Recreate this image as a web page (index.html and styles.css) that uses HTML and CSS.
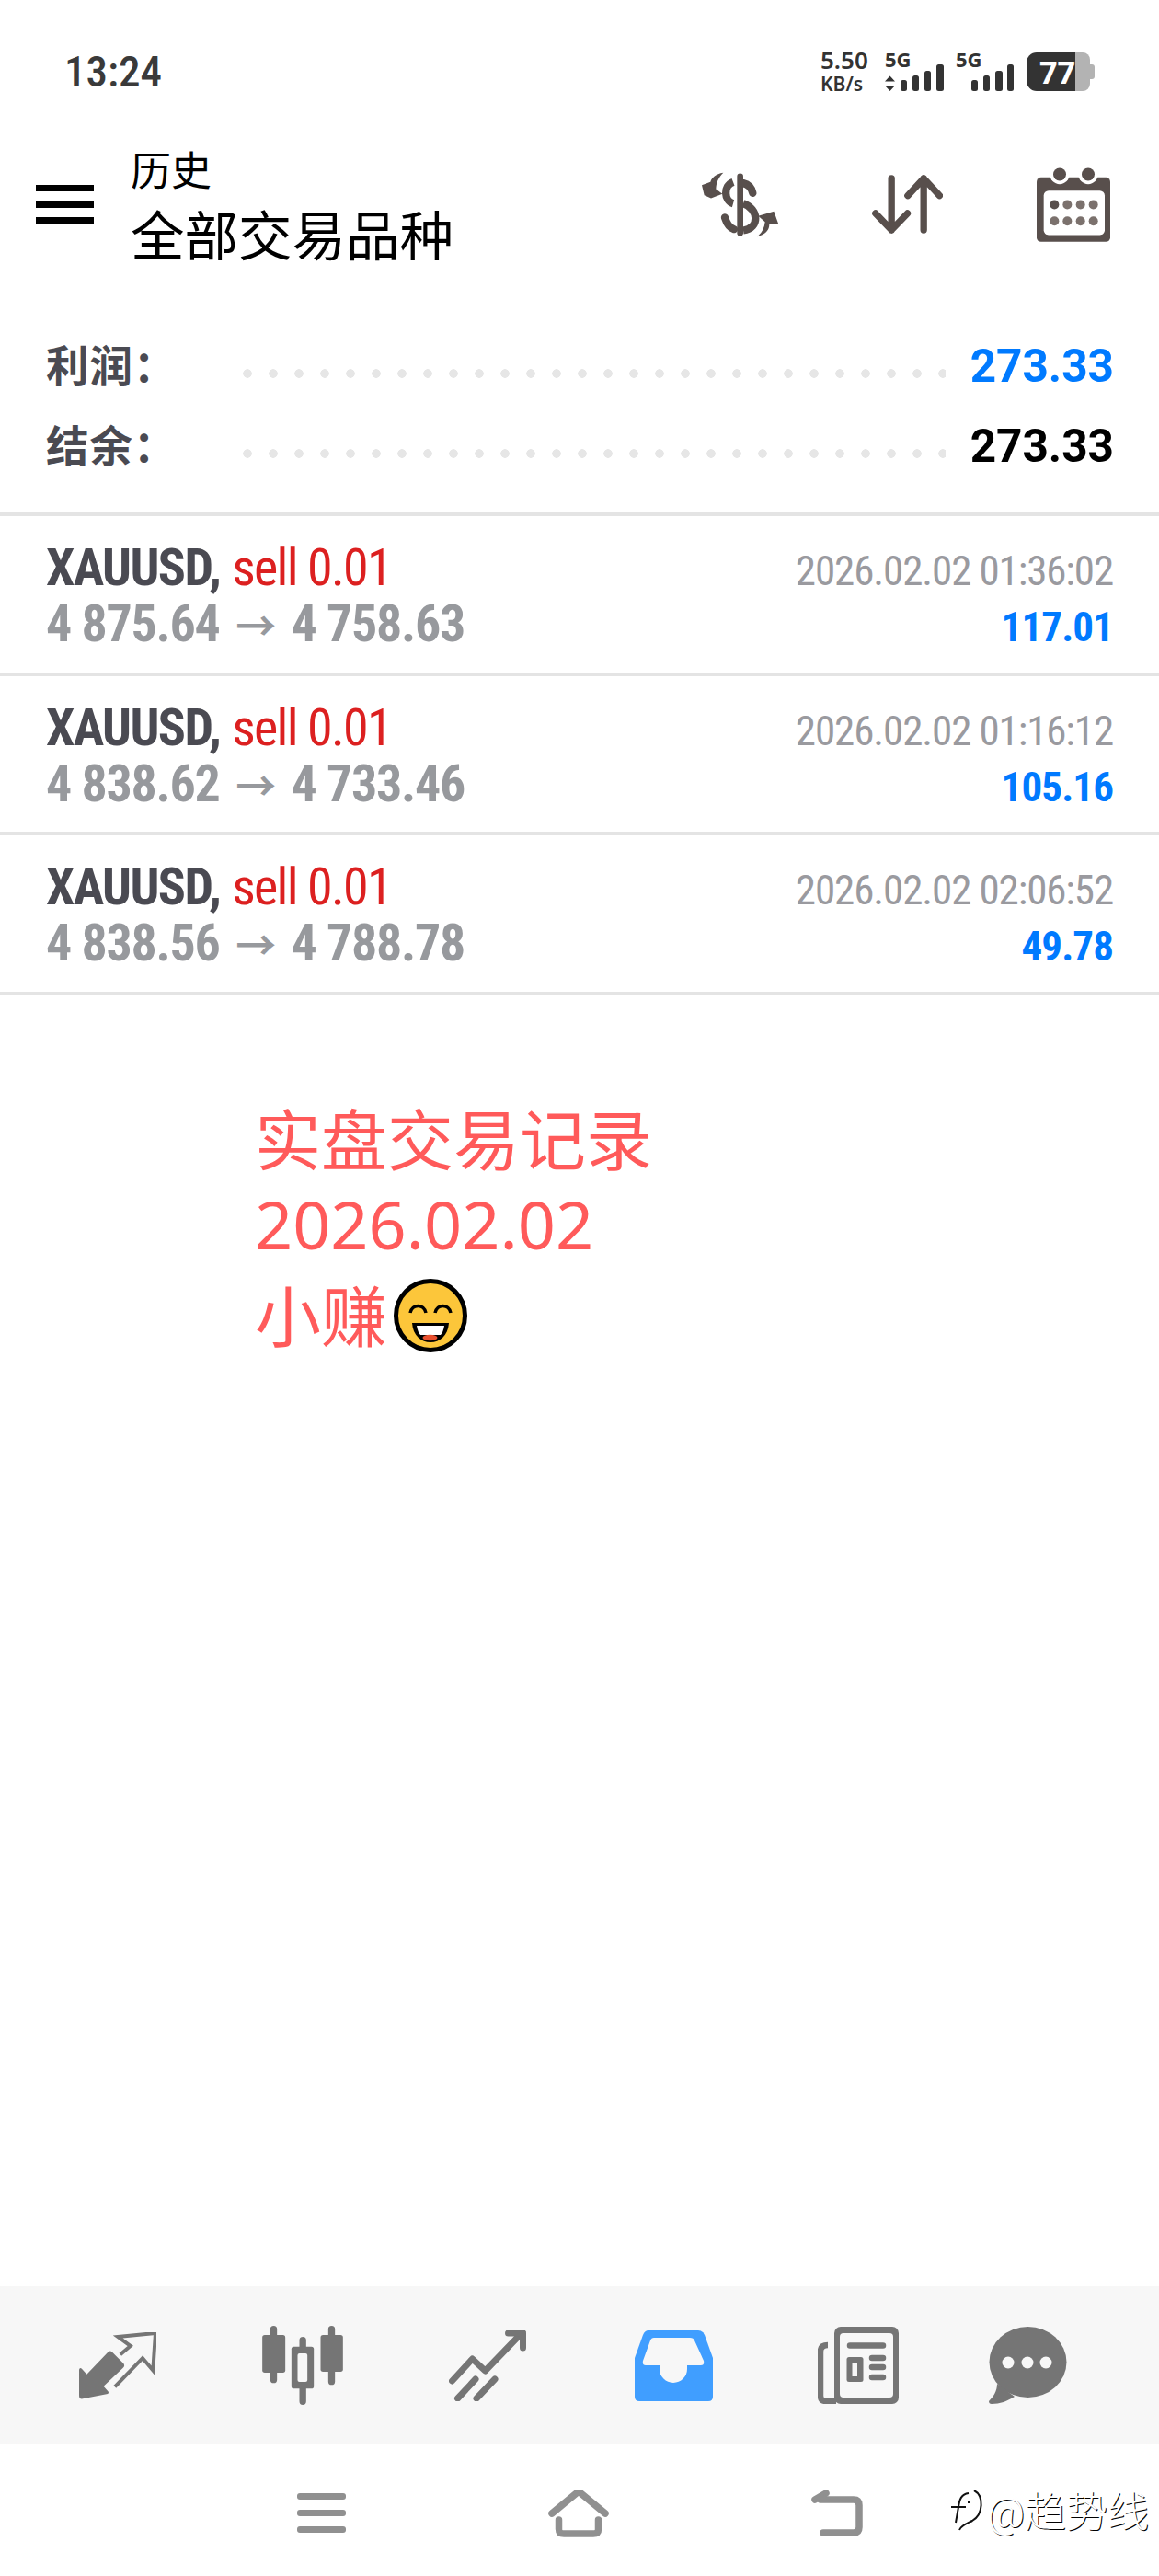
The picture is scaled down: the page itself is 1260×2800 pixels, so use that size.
FILE: index.html
```html
<!DOCTYPE html>
<html lang="zh-CN">
<head>
  <meta charset="UTF-8" />
  <meta name="viewport" content="width=device-width, initial-scale=1.0" />
  <title>历史</title>
  <link rel="stylesheet" href="styles.css">
</head>
<body>

<div class="page">

  <div class="status-bar">
    <div class="clock">13:24</div>
    <div class="status-right">
      <div class="net-speed"><span>5.50</span><small>KB/s</small></div>
      <svg class="signal" viewBox="0 0 64 42">
        <text x="0" y="16">5G</text>
        <path d="M5.500 25.500 11 31.500H0zM5.500 42 11 36H0z" fill="#333"/>
        <rect x="17" y="30" width="7" height="12" rx="2.500"/>
        <rect x="30" y="25" width="7" height="17" rx="2.500"/>
        <rect x="43" y="20" width="7" height="22" rx="2.500"/>
        <rect x="56" y="13" width="8" height="29" rx="2.500"/>
      </svg>
      <svg class="signal signal-b" viewBox="0 0 64 42">
        <text x="0" y="16">5G</text>
        <rect x="17" y="30" width="7" height="12" rx="2.500"/>
        <rect x="30" y="25" width="7" height="17" rx="2.500"/>
        <rect x="43" y="20" width="8" height="22" rx="2.500"/>
        <rect x="56" y="13" width="7" height="29" rx="2.500"/>
      </svg>
      <div class="battery">
        <div class="battery-level">77</div>
        <div class="battery-rest"></div>
        <div class="battery-nub"></div>
      </div>
    </div>
  </div>

  <div class="top-bar">
    <div class="menu-btn"><i></i><i></i><i></i></div>
    <div class="title-block">
      <div class="title-small">历史</div>
      <div class="title-big">全部交易品种</div>
    </div>
    <div class="top-actions">
      <svg class="icon-money" viewBox="70 70 252 212">
        <path d="M140 72C116 76 102 88 98 102L70 112 78 145 100 155 137 141 116 125C117 105 124 88 140 72Z" fill="#584f4c"/>
        <path d="M250 280C274 274 290 262 290 240L320 240 305 198 254 213 276 232C274 252 266 268 250 280Z" fill="#584f4c"/>
        <g fill="none" stroke="#584f4c" stroke-width="25">
          <path d="M195 84V268" stroke-width="20" stroke-linecap="round"/>
          <path d="M172 102C138 115 143 164 172 172"/>
          <path d="M205 106C222 110 232 120 236 138" stroke-linecap="round"/>
          <path d="M205 172C256 190 260 252 205 260"/>
          <path d="M145 218C152 240 160 252 175 256" stroke-linecap="round"/>
        </g>
      </svg>
      <svg class="icon-sort" viewBox="625 80 230 192">
        <g fill="none" stroke="#584f4c" stroke-width="22" stroke-linecap="round" stroke-linejoin="round">
          <path d="M688 92V260M636 206 688 260 740 206"/>
          <path d="M793 260V92M741 148 793 92 845 148"/>
        </g>
      </svg>
      <svg class="icon-cal" viewBox="1160 50 240 242">
        <rect x="1160" y="82" width="240" height="210" rx="14" fill="#584f4c"/>
        <rect x="1183" y="125" width="199" height="145" rx="16" fill="#fff"/>
        <circle cx="1235" cy="72" r="32" fill="#fff"/>
        <circle cx="1328" cy="72" r="32" fill="#fff"/>
        <circle cx="1235" cy="72" r="21" fill="#584f4c"/>
        <circle cx="1328" cy="72" r="21" fill="#584f4c"/>
        <g fill="#7b716d">
          <circle cx="1218" cy="171" r="15" fill="#584f4c"/>
          <circle cx="1260" cy="171" r="15"/>
          <circle cx="1303" cy="171" r="15"/>
          <circle cx="1345" cy="171" r="15"/>
          <circle cx="1218" cy="224" r="15"/>
          <circle cx="1260" cy="224" r="15"/>
          <circle cx="1303" cy="224" r="15"/>
          <circle cx="1345" cy="224" r="15"/>
        </g>
      </svg>
    </div>
  </div>

  <div class="summary">
    <div class="summary-row">
      <span class="summary-label">利润：</span>
      <span class="summary-dots"></span>
      <span class="summary-value blue">273.33</span>
    </div>
    <div class="summary-row">
      <span class="summary-label">结余：</span>
      <span class="summary-dots"></span>
      <span class="summary-value">273.33</span>
    </div>
  </div>

  <div class="deal">
    <div class="deal-line">
      <span class="deal-main"><b>XAUUSD,</b> <em>sell 0.01</em></span>
      <span class="deal-date">2026.02.02 01:36:02</span>
    </div>
    <div class="deal-line">
      <span class="deal-price">4 875.64 <i>→</i> 4 758.63</span>
      <span class="deal-profit">117.01</span>
    </div>
  </div>
  <div class="deal">
    <div class="deal-line">
      <span class="deal-main"><b>XAUUSD,</b> <em>sell 0.01</em></span>
      <span class="deal-date">2026.02.02 01:16:12</span>
    </div>
    <div class="deal-line">
      <span class="deal-price">4 838.62 <i>→</i> 4 733.46</span>
      <span class="deal-profit">105.16</span>
    </div>
  </div>
  <div class="deal">
    <div class="deal-line">
      <span class="deal-main"><b>XAUUSD,</b> <em>sell 0.01</em></span>
      <span class="deal-date">2026.02.02 02:06:52</span>
    </div>
    <div class="deal-line">
      <span class="deal-price">4 838.56 <i>→</i> 4 788.78</span>
      <span class="deal-profit">49.78</span>
    </div>
  </div>

  <div class="content">
    <div class="note">
      <div class="note-first">实盘交易记录</div>
      <div>2026.02.02</div>
      <div class="note-last">小赚
        <svg class="emoji" viewBox="0 0 80 80">
          <circle cx="40" cy="40" r="37.500" fill="#fcc63a" stroke="#000" stroke-width="5"/>
          <path d="M18 37C20 27 33 27 35 37M45 37C47 27 60 27 62 37" fill="none" stroke="#000" stroke-width="3.500"/>
          <path d="M20 48H60C59 62 50 69 40 69 30 69 21 62 20 48Z" fill="#000"/>
          <path d="M25 51H55C54 56 53 59 51 61H29C27 59 26 56 25 51Z" fill="#fff"/>
          <ellipse cx="39.500" cy="64" rx="8" ry="3.200" fill="#e8502f"/>
        </svg>
      </div>
    </div>
  </div>

  <div class="tab-bar">
    <div class="tab">
      <svg class="tab-quotes" viewBox="78 105 254 220">
        <path d="M175 170Q182 164 188 170L224 206Q232 214 224 222L160 282 176 300Q178 306 170 308L92 323Q80 325 80 314V228Q82 218 90 226L105 243Z" fill="#757575"/>
        <path d="M197 284 288 190 322 230 330 108 207 120 248 150 215 178" fill="none" stroke="#757575" stroke-width="12"/>
      </svg>
    </div>
    <div class="tab">
      <svg class="tab-chart" viewBox="675 82 263 258">
        <g stroke="#757575" stroke-width="22" stroke-linecap="round">
          <path d="M712 93V258M901 93V264M807 129V329"/>
        </g>
        <rect x="675" y="112" width="75" height="123" rx="8" fill="#757575"/>
        <rect x="865" y="112" width="73" height="120" rx="8" fill="#757575"/>
        <rect x="770" y="150" width="73" height="137" rx="8" fill="#757575"/>
        <rect x="790" y="172" width="32" height="93" rx="6" fill="#f7f7f7"/>
      </svg>
    </div>
    <div class="tab">
      <svg class="tab-trade" viewBox="0 0 84 77">
        <g fill="none" stroke="#757575" stroke-width="7" stroke-linecap="round" stroke-linejoin="round">
          <path d="M3.500 55 25.500 31 39.500 44 80 2"/>
          <path d="M64.500 3H80.500V19"/>
          <path d="M9.500 74 29 53M30 74 50 53"/>
        </g>
      </svg>
    </div>
    <div class="tab">
      <svg class="tab-history" viewBox="0 0 85 77">
        <path d="M15 0H69Q74 0 76 5L85 30V72Q85 77 80 77H5Q0 77 0 72V30L9 5Q11 0 15 0Z" fill="#409eff"/>
        <path d="M21 8H60Q64 8 65 11L75 33Q76 38 72 38H57V42A15 15 0 0 1 27 42V38H12Q8 38 9 33L17 11Q18 8 21 8Z" fill="#f7f7f7"/>
      </svg>
    </div>
    <div class="tab">
      <svg class="tab-news" viewBox="0 0 88 84">
        <rect x="18" y="0" width="70" height="84" rx="7" fill="#757575"/>
        <rect x="24" y="7" width="58" height="70" rx="4" fill="#f7f7f7"/>
        <path d="M11 20Q3 20 3 27V75Q3 81 9 81H20" fill="none" stroke="#757575" stroke-width="6.500"/>
        <rect x="31.500" y="33" width="18" height="27" rx="2.500" fill="#757575"/>
        <rect x="37.500" y="39" width="5.500" height="15" fill="#f7f7f7"/>
        <g stroke="#757575" stroke-width="6.500" stroke-linecap="round">
          <path d="M35 20.500H71M59 34H71M59 44H71M59 55H71"/>
        </g>
      </svg>
    </div>
    <div class="tab">
      <svg class="tab-chat" viewBox="0 0 85 84">
        <ellipse cx="42.500" cy="38.500" rx="42" ry="38.500" fill="#757575"/>
        <path d="M9 62C9 70 5 76 0 81Q0 84 3 84C12 84 20 81 28 76Z" fill="#757575"/>
        <circle cx="21" cy="39" r="6.500" fill="#f7f7f7"/>
        <circle cx="42" cy="39" r="6.500" fill="#f7f7f7"/>
        <circle cx="62" cy="39" r="6.500" fill="#f7f7f7"/>
      </svg>
    </div>
  </div>

  <div class="nav-bar">
    <div class="nav-menu"><i></i><i></i><i></i></div>
    <svg class="nav-home" viewBox="0 0 66 52">
      <g fill="none" stroke="#909090" stroke-width="7.500" stroke-linecap="round">
        <path d="M4 26 33 2 62 26"/>
        <path d="M11.500 33V43Q11.500 48 17 48H49Q54.500 48 54.500 43V33"/>
      </g>
    </svg>
    <svg class="nav-back" viewBox="0 0 57 52">
      <g fill="none" stroke="#909090" stroke-width="7.500" stroke-linecap="round">
        <path d="M4 11 16 4"/>
        <path d="M10 11H46Q52 11 52 17V41Q52 47 46 47H13"/>
      </g>
    </svg>
    <div class="watermark">
      <svg class="watermark-logo" viewBox="0 0 38 46">
        <path d="M26 2C37 8 36 28 24 35 18 38 12 40 10 45M20 5C12 6 10 12 9 20L6 37M1 20H17M20 14V16" fill="none" stroke="#111" stroke-width="2"/>
      </svg>
      <span>@趋势线</span>
    </div>
  </div>

</div>

</body>
</html>
```

FILE: styles.css
```css
* {
  box-sizing: border-box;
}

body {
  margin: 0;
  background: #fff;
  font-family: Roboto, "Noto Sans CJK SC", sans-serif;
}

.page {
  position: relative;
  width: 1260px;
  height: 2800px;
  display: flex;
  flex-direction: column;
  overflow: hidden;
}

/* status bar */
.status-bar {
  height: 156px;
  display: flex;
  align-items: center;
  justify-content: space-between;
  padding: 0 70px;
}

.clock {
  margin-bottom: 2px;
  font-size: 47px;
  font-weight: 500;
  font-stretch: 86%;
  color: #3a3a3a;
}

.status-right {
  display: flex;
  align-items: center;
  color: #333;
}

.net-speed {
  width: 51px;
  display: flex;
  flex-direction: column;
  font-family: "Noto Sans", sans-serif;
  font-weight: 600;
  line-height: 26px;
  margin-right: 19px;
}

.net-speed span {
  font-size: 26px;
}

.net-speed small {
  font-size: 21px;
}

.signal {
  width: 64px;
  height: 42px;
  fill: #333;
  margin-right: 13px;
  overflow: visible;
}

.signal text {
  font-family: "Noto Sans", sans-serif;
  font-size: 22px;
  font-weight: 700;
}

.battery {
  display: flex;
  align-items: center;
  height: 42px;
}

.battery-level {
  width: 53px;
  height: 42px;
  background: #333;
  border-radius: 11px 0 0 11px;
  color: #fff;
  font-family: "Noto Sans", sans-serif;
  font-size: 34px;
  font-weight: 700;
  line-height: 42px;
  text-align: right;
}

.battery-rest {
  width: 16px;
  height: 42px;
  background: #b3b3b3;
  border-radius: 0 8px 8px 0;
}

.battery-nub {
  width: 5px;
  height: 16px;
  background: #b3b3b3;
  border-radius: 0 3px 3px 0;
}

/* header */
.top-bar {
  height: 132px;
  display: flex;
  align-items: center;
  padding-left: 39px;
}

.menu-btn {
  width: 63px;
  height: 42px;
  display: flex;
  flex-direction: column;
  justify-content: space-between;
}

.menu-btn i {
  height: 7px;
  background: #000;
}

.title-block {
  margin-left: 40px;
  padding-top: 5px;
  color: #000;
}

.title-small {
  font-size: 44px;
  line-height: 62px;
}

.title-big {
  margin-top: 5px;
  font-size: 58.500px;
  line-height: 70px;
}

.top-actions {
  position: relative;
  margin-left: auto;
  display: flex;
  align-items: center;
  height: 80px;
  padding-right: 53px;
}

.icon-money {
  width: 84px;
  height: 71px;
}

.icon-sort {
  width: 77px;
  height: 64px;
  margin-left: 101px;
}

.icon-cal {
  width: 80px;
  height: 81px;
  margin-left: 102px;
}

/* totals */
.summary {
  padding: 66px 49px 30px 50px;
  border-bottom: 4px solid #e4e4e4;
  height: 273px;
}

.summary-row {
  height: 87px;
  display: flex;
  align-items: center;
}

.summary-label {
  width: 214px;
  margin-bottom: 6px;
  font-size: 46.500px;
  font-weight: 700;
  letter-spacing: 1px;
  color: #4a4a52;
}

.summary-dots {
  flex: 1;
  height: 10px;
  margin: 16px 27px 0 0;
  background-image: radial-gradient(circle at 5px 5px, #e6e6e6 4.500px, transparent 5px);
  background-size: 28px 10px;
  background-repeat: repeat-x;
}

.summary-value {
  font-size: 49.500px;
  font-weight: 700;
  color: #000;
}

.summary-value.blue {
  color: #007aff;
}

/* deals */
.deal {
  height: 173.500px;
  padding: 26px 50px 0;
  border-bottom: 4px solid #e4e4e4;
}

.deal-line {
  height: 61px;
  display: flex;
  justify-content: space-between;
  align-items: baseline;
  line-height: 61px;
  font-stretch: 75%;
}

.deal-main {
  font-size: 56px;
}

.deal-main b {
  font-weight: 700;
  letter-spacing: -1.600px;
  color: #4a4a52;
}

.deal-main em {
  font-style: normal;
  font-weight: 400;
  letter-spacing: -1.700px;
  color: #dc2020;
}

.deal-date {
  font-size: 45px;
  letter-spacing: -1.100px;
  color: #9a9a9f;
}

.deal-price {
  font-size: 56px;
  font-weight: 700;
  letter-spacing: -1.300px;
  color: #97999d;
}

.deal-price i {
  font-style: normal;
  font-size: 44px;
  margin: 0 6px;
}

.deal-profit {
  font-size: 45px;
  font-weight: 700;
  letter-spacing: -0.900px;
  color: #007aff;
}

/* annotation drawn on the screenshot */
.content {
  flex: 1;
  padding: 109px 0 0 277px;
}

.note {
  font-family: "Noto Sans", "Noto Sans CJK SC", sans-serif;
  font-size: 72px;
  line-height: 95px;
  color: #ff5a5a;
}

.note-first {
  margin-bottom: -3px;
}

.note-last {
  display: flex;
  align-items: center;
  margin-top: 5px;
}

.emoji {
  width: 80px;
  height: 80px;
  margin-left: 7px;
}

/* bottom tabs */
.tab-bar {
  height: 172px;
  flex-shrink: 0;
  display: flex;
  align-items: center;
  padding-left: 27px;
  background: #f7f7f7;
}

.tab {
  width: 201px;
  display: flex;
  justify-content: center;
}

.tab:last-child {
  width: 170px;
}

.tab-quotes {
  width: 85px;
  height: 73px;
}

.tab-chart {
  width: 88px;
  height: 86px;
}

.tab-trade {
  width: 84px;
  height: 77px;
}

.tab-history {
  width: 85px;
  height: 77px;
  margin-left: 3px;
}

.tab-news {
  width: 88px;
  height: 84px;
  margin-left: 3px;
}

.tab-chat {
  width: 85px;
  height: 84px;
}

/* system navigation */
.nav-bar {
  height: 143px;
  flex-shrink: 0;
  display: flex;
  align-items: center;
  gap: 220px;
  padding: 6px 0 0 323px;
}

.nav-menu {
  width: 53px;
  height: 43px;
  display: flex;
  flex-direction: column;
  justify-content: space-between;
}

.nav-menu i {
  height: 7px;
  border-radius: 3px;
  background: #909090;
}

.nav-home {
  width: 66px;
  height: 52px;
}

.nav-back {
  width: 57px;
  height: 52px;
}

.watermark {
  position: absolute;
  right: 11px;
  bottom: 40px;
  display: flex;
  align-items: center;
  font-size: 45px;
  font-weight: 300;
  color: #fff;
  text-shadow: 1px 1px 0 #000;
}

.watermark-logo {
  width: 38px;
  height: 46px;
  margin-right: 2px;
}
```
